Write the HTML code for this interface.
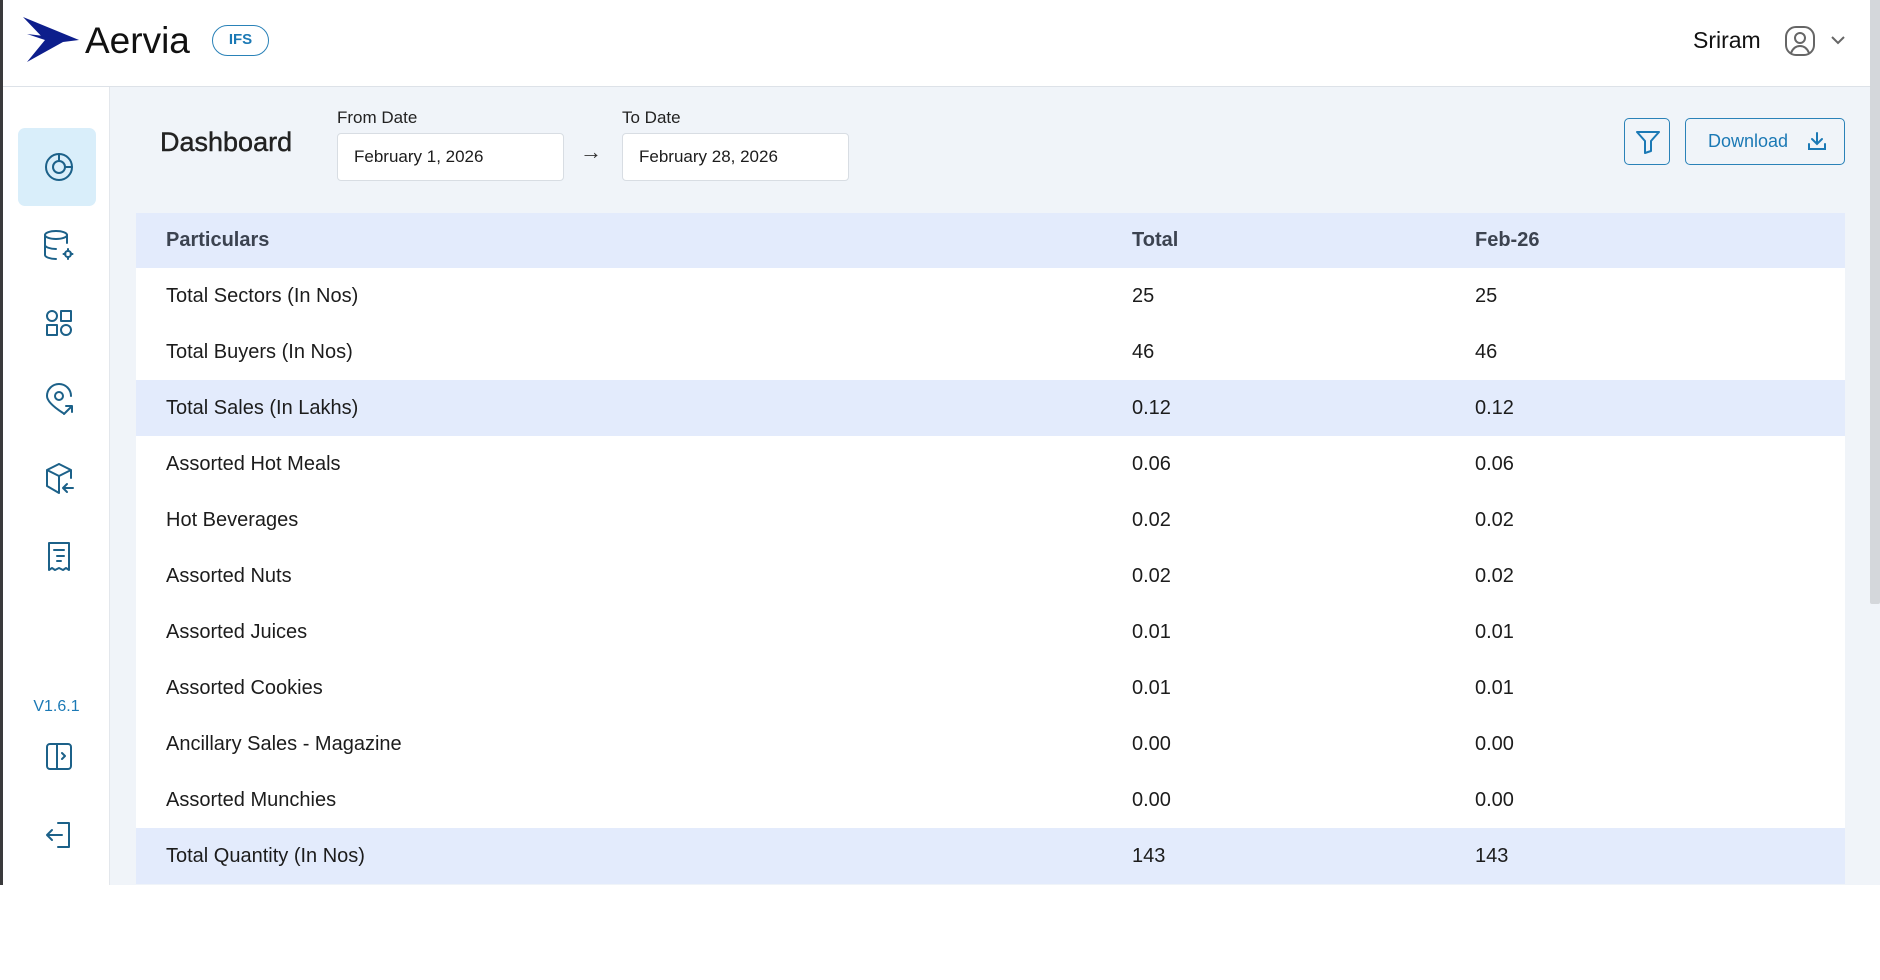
<!DOCTYPE html>
<html><head><meta charset="utf-8"><style>
*{box-sizing:border-box;margin:0;padding:0}
body{width:1880px;height:980px;background:#fff;font-family:"Liberation Sans",sans-serif;position:relative;overflow:hidden;color:#1c1c1c}
.lb{position:absolute;left:0;top:0;width:3px;height:885px;background:#3a3a3c}
.hdr{position:absolute;left:3px;top:0;width:1867px;height:87px;background:#fff;border-bottom:1px solid #dde2e8}
.side{position:absolute;left:3px;top:87px;width:107px;height:798px;background:#fff;border-right:1px solid #e3e7ec}
.main{position:absolute;left:110px;top:87px;width:1760px;height:798px;background:#f0f4f9}
.sb{position:absolute;left:1870px;top:0;width:10px;height:885px;background:#f0f4f9}
.thumb{position:absolute;left:1870px;top:0;width:10px;height:604px;background:#d4d7db;border-radius:0 0 2px 2px}
.ic{position:absolute;left:38px;width:36px;height:36px}
.ic svg{width:36px;height:36px;fill:none;stroke:#1c6189;stroke-width:2;stroke-linecap:round;stroke-linejoin:round}
table{position:absolute;left:136px;top:213px;width:1709px;border-collapse:collapse;font-size:20px;table-layout:fixed}
td,th{height:56px;padding-left:30px;text-align:left;font-weight:normal}
th{height:55px;font-weight:bold;color:#3c4350;background:#e3ebfc}
tr{background:#fff}
tr.h{background:#e3ebfc}
</style></head><body>
<div class="lb"></div>
<div class="hdr">
 <svg style="position:absolute;left:18px;top:16px" width="60" height="48" viewBox="0 0 60 48"><path d="M2 1 L58 24 L24 24 Z" fill="#0d1e8c"/><path d="M6 18 L24 24 L6 46 L42 26 L58 24 Z" fill="#0d1e8c"/></svg>
 <div style="position:absolute;left:82px;top:20px;font-size:37px;color:#111">Aervia</div>
 <div style="position:absolute;left:209px;top:25px;width:57px;height:31px;border:1.5px solid #2a82b8;border-radius:16px;color:#1b79b5;font-weight:bold;font-size:15px;text-align:center;line-height:28px">IFS</div>
 <div style="position:absolute;left:1690px;top:27px;font-size:23px;color:#111">Sriram</div>
 <svg style="position:absolute;left:1780px;top:24px" width="34" height="34" viewBox="0 0 34 34" fill="none" stroke="#666" stroke-width="2"><rect x="3" y="3" width="28" height="28" rx="10"/><circle cx="17" cy="14" r="5"/><path d="M8 29c2-5 5-7 9-7s7 2 9 7"/></svg>
 <svg style="position:absolute;left:1827px;top:34px" width="16" height="12" viewBox="0 0 16 12" fill="none" stroke="#666" stroke-width="2"><path d="M2 3l6 6 6-6"/></svg>
</div>
<div class="side">
 <div style="position:absolute;left:15px;top:41px;width:78px;height:78px;background:#d9eefa;border-radius:7px"></div>
 <div class="ic" style="top:62px"><svg viewBox="0 0 36 36"><circle cx="18" cy="18" r="13"/><circle cx="18" cy="18" r="6"/><path d="M18 5v7M24 18h7"/></svg></div>
 <div class="ic" style="top:140px"><svg viewBox="0 0 36 36"><ellipse cx="15" cy="8" rx="11" ry="4"/><path d="M4 8v20c0 2 5 4 11 4M26 8v8M4 18c0 2 5 4 11 4"/><circle cx="27" cy="27" r="3"/><path d="M27 22v2M27 30v2M22.5 27h2M29.5 27h2"/></svg></div>
 <div class="ic" style="top:218px"><svg viewBox="0 0 36 36"><circle cx="11" cy="11" r="5"/><rect x="20" y="6" width="10" height="10"/><rect x="6" y="20" width="10" height="10"/><circle cx="25" cy="25" r="5"/></svg></div>
 <div class="ic" style="top:296px"><svg viewBox="0 0 36 36"><path d="M22 30c-3-2-16-10-16-17a12 12 0 0 1 24 0"/><circle cx="18" cy="13" r="4"/><path d="M23 31l8-8M25 23h6v6"/></svg></div>
 <div class="ic" style="top:374px"><svg viewBox="0 0 36 36"><path d="M18 3l12 6v8M18 3L6 9v16l12 7M6 9l12 6 12-6M18 15v17M22 27h10M26 23l-4 4 4 4"/></svg></div>
 <div class="ic" style="top:452px"><svg viewBox="0 0 36 36"><path d="M8 4h20v27l-3-2-3 2-4-2-4 2-3-2-3 2z"/><path d="M13 11h10M16 17h7M16 22h4"/></svg></div>
 <div style="position:absolute;left:0;width:107px;top:611px;text-align:center;color:#1b79b5;font-size:16px">V1.6.1</div>
 <div class="ic" style="top:652px"><svg viewBox="0 0 36 36"><rect x="6" y="5" width="24" height="25" rx="3"/><path d="M16 5v25M21 14l3 3-3 3"/></svg></div>
 <div class="ic" style="top:730px"><svg viewBox="0 0 36 36"><path d="M17 6h11v24H17M6 18h15M11 13l-5 5 5 5"/></svg></div>
</div>
<div class="main">
 <div style="position:absolute;left:50px;top:40px;font-size:27px;color:#222;-webkit-text-stroke:0.4px #222">Dashboard</div>
 <div style="position:absolute;left:227px;top:21px;font-size:17px;color:#222">From Date</div>
 <div style="position:absolute;left:227px;top:46px;width:227px;height:48px;background:#fff;border:1px solid #d8dde3;border-radius:4px;padding-left:16px;line-height:46px;font-size:17px">February 1, 2026</div>
 <div style="position:absolute;left:470px;top:52px;font-size:22px;color:#333">→</div>
 <div style="position:absolute;left:512px;top:21px;font-size:17px;color:#222">To Date</div>
 <div style="position:absolute;left:512px;top:46px;width:227px;height:48px;background:#fff;border:1px solid #d8dde3;border-radius:4px;padding-left:16px;line-height:46px;font-size:17px">February 28, 2026</div>
 <div style="position:absolute;left:1514px;top:31px;width:46px;height:47px;border:1.5px solid #2a82b8;border-radius:5px"><svg style="position:absolute;left:10px;top:10px" width="26" height="26" viewBox="0 0 26 26" fill="none" stroke="#1b79b5" stroke-width="2" stroke-linejoin="round"><path d="M2 3h22l-8 9v10l-6 2V12z"/></svg></div>
 <div style="position:absolute;left:1575px;top:31px;width:160px;height:47px;border:1.5px solid #2a82b8;border-radius:5px;color:#1b79b5;font-size:18px;line-height:44px;padding-left:22px">Download<svg style="position:absolute;left:121px;top:12px" width="20" height="20" viewBox="0 0 20 20" fill="none" stroke="#1b79b5" stroke-width="2" stroke-linecap="round"><path d="M10 2v11M5 8l5 5 5-5M2 13v5h16v-5"/></svg></div>
</div>
<div class="sb"></div><div class="thumb"></div>
<table>
<colgroup><col style="width:966px"><col style="width:343px"><col style="width:400px"></colgroup>
<tr><th>Particulars</th><th>Total</th><th>Feb-26</th></tr>
<tr><td>Total Sectors (In Nos)</td><td>25</td><td>25</td></tr>
<tr><td>Total Buyers (In Nos)</td><td>46</td><td>46</td></tr>
<tr class="h"><td>Total Sales (In Lakhs)</td><td>0.12</td><td>0.12</td></tr>
<tr><td>Assorted Hot Meals</td><td>0.06</td><td>0.06</td></tr>
<tr><td>Hot Beverages</td><td>0.02</td><td>0.02</td></tr>
<tr><td>Assorted Nuts</td><td>0.02</td><td>0.02</td></tr>
<tr><td>Assorted Juices</td><td>0.01</td><td>0.01</td></tr>
<tr><td>Assorted Cookies</td><td>0.01</td><td>0.01</td></tr>
<tr><td>Ancillary Sales - Magazine</td><td>0.00</td><td>0.00</td></tr>
<tr><td>Assorted Munchies</td><td>0.00</td><td>0.00</td></tr>
<tr class="h"><td>Total Quantity (In Nos)</td><td>143</td><td>143</td></tr>
</table>
</body></html>
